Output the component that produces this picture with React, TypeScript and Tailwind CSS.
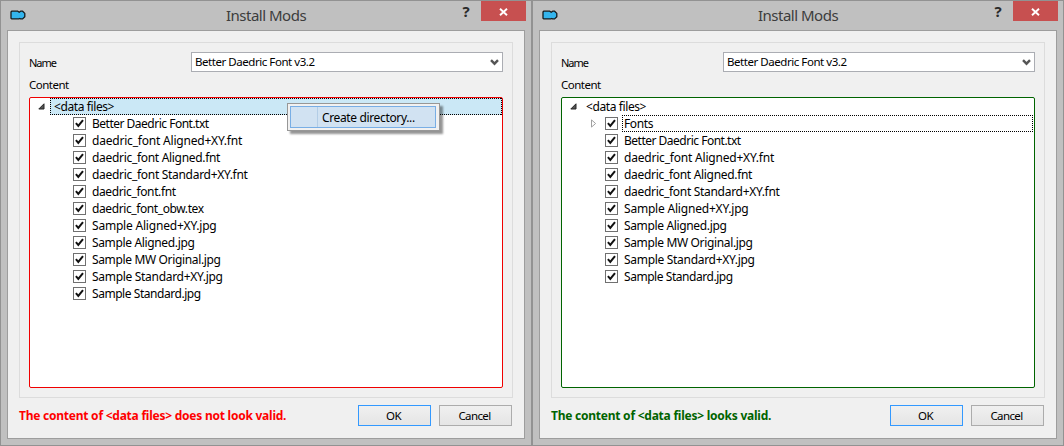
import React from "react";

type Item = { name: string; spacing: string; expandable?: boolean; focused?: boolean };

type DialogProps = {
  items: Item[];
  valid: boolean;
  rootSelected?: boolean;
  menu?: boolean;
};

const AppIcon = () => (
  <svg className="ml-[9px] mt-[9px] shrink-0" width="16" height="10" viewBox="0 0 16 10">
    <path
      d="M1.7 1.2H7.8L9.2 2.3L10.6 1.2H12.6L14.8 3.4V6.7L12.6 8.9H10.6L9.8 8.5L8.8 8.9H1.7L1 8.2V2Z"
      fill="#33b5ee"
      stroke="#151c20"
      strokeWidth="1.3"
      strokeLinejoin="round"
    />
  </svg>
);

const Check = () => (
  <span className="flex h-[13px] w-[13px] shrink-0 items-center justify-center border border-[#707070] bg-white">
    <svg width="11" height="11" viewBox="0 0 11 11">
      <path d="M1.9 5.2L4.3 7.9L9 2.2" fill="none" stroke="#111" strokeWidth="2" />
    </svg>
  </span>
);

const Opened = () => (
  <svg className="shrink-0" width="7" height="7" viewBox="0 0 7 7">
    <path d="M6 .8V6H.8Z" fill="#555" stroke="#262626" strokeWidth="1" />
  </svg>
);

const Closed = () => (
  <svg className="shrink-0" width="6" height="9" viewBox="0 0 6 9">
    <path d="M.5 .9V8.1L4.6 4.5Z" fill="#fff" stroke="#a0a0a0" strokeWidth="1" />
  </svg>
);

const Chevron = () => (
  <svg className="mr-[3px] mt-[1px]" width="9" height="7" viewBox="0 0 9 7">
    <path d="M1 1.2L4.5 4.7L8 1.2" fill="none" stroke="#555" strokeWidth="2.4" />
  </svg>
);

const Dots = () => (
  <svg className="pointer-events-none absolute inset-0 h-full w-full" shapeRendering="crispEdges">
    <path d="M0 .5H460" stroke="#000" strokeDasharray="1 1" />
    <path d="M0 16.5H460" stroke="#000" strokeDasharray="1 1" />
    <path d="M.5 0V17" stroke="#000" strokeDasharray="1 1" />
    <svg x="100%" width="1" height="17" overflow="visible">
      <path d="M-.5 0V17" stroke="#000" strokeDasharray="1 1" />
    </svg>
  </svg>
);

const ContextMenu = () => (
  <div className="absolute left-[257px] top-[5px] h-[28px] w-[153px] border border-[#979797] bg-[#f1f1f1] p-[2px] tracking-[-0.36px] shadow-[3px_3px_2px_rgba(0,0,0,0.42)]">
    <div className="flex h-[22px] w-[146px] items-center border border-[#78aee5] bg-[#d1e2f2]">
      <span className="h-full w-[27px] border-r border-[#b3cde6]" />
      <span className="ml-[4px] mt-[2px] whitespace-nowrap text-[12px] leading-[16px]">Create directory...</span>
    </div>
  </div>
);

const Dialog = ({ items, valid, rootSelected, menu }: DialogProps) => (
  <section className="flex h-[446px] w-[532px] flex-col border border-[#929292] bg-[#c0c0c0]">
    <header className="flex h-[29px] shrink-0 items-start">
      <AppIcon />
      <h1 className="ml-[200px] mt-[4px] w-[141px] whitespace-nowrap text-[15px] leading-[20px] tracking-[-0.5px] text-[#3c3c3c]">
        Install Mods
      </h1>
      <span className="ml-[93px] w-[12px] text-center text-[15px] font-bold leading-[21px] text-[#2b2b2b]">?</span>
      <span className="ml-auto mr-[5px] flex h-[20px] w-[45px] items-center justify-center bg-[#c75050]">
        <svg className="mt-[1px]" width="9" height="8" viewBox="0 0 9 8">
          <path d="M1 .7L8 7.3M8 .7L1 7.3" stroke="#fff" strokeWidth="1.9" />
        </svg>
      </span>
    </header>
    <main className="mx-[6px] flex h-[409px] flex-col border border-[#9d9d9d] bg-[#f0f0f0] px-[11px] pt-[11px]">
      <div className="flex h-[356px] flex-col border border-[#dcdcdc] px-[9px] pt-[9px]">
        <div className="flex h-[20px] items-center">
          <span className="w-[162px] pt-[2px] text-[11px] tracking-[-1px]">Name</span>
          <div className="flex h-[20px] w-[312px] items-center justify-between border border-[#abadb3] bg-white pl-[3px]">
            <span className="text-[11.5px] leading-[18px] tracking-[-0.45px]">Better Daedric Font v3.2</span>
            <Chevron />
          </div>
        </div>
        <span className="mt-[5px] h-[16px] text-[11.5px] leading-[16px] tracking-[-0.5px]">Content</span>
        <div
          className={`relative mt-[4px] h-[291px] w-[474px] rounded-[2px] border bg-white text-[12px] ${
            valid ? "border-[#006400]" : "border-[#f00000]"
          }`}
        >
          <div className="flex h-[17px] items-center">
            <span className="flex w-[20px] items-center pl-[8px]">
              <Opened />
            </span>
            <span
              className={`relative flex h-[17px] w-[452px] items-center pl-[4px] tracking-[-0.4px] ${rootSelected ? "bg-[#cbe8f6]" : ""}`}
            >
              {"<data files>"}
              {rootSelected && <Dots />}
            </span>
          </div>
          {items.map((item) => (
            <div key={item.name} className="flex h-[17px] items-center">
              <span className="flex w-[43px] items-center pl-[29px]">{item.expandable && <Closed />}</span>
              <Check />
              <span
                className={`relative ml-[4px] flex h-[17px] w-[411px] items-center whitespace-nowrap pl-[2px] ${item.spacing}`}
              >
                {item.name}
                {item.focused && <Dots />}
              </span>
            </div>
          ))}
          {menu && <ContextMenu />}
        </div>
      </div>
      <footer className="mt-[7px] flex h-[21px] items-center">
        <strong
          className={`w-[339px] whitespace-nowrap text-[12px] font-bold tracking-[-0.24px] ${
            valid ? "text-[#006400]" : "text-[#ff0000]"
          }`}
        >
          The content of &lt;data files&gt; {valid ? "looks valid." : "does not look valid."}
        </strong>
        <button className="h-[21px] w-[73px] border border-[#3399ff] bg-linear-to-b from-[#f0f0f0] to-[#e5e5e5] pr-[2px] text-[11.5px] leading-[19px] tracking-[-0.6px]">
          OK
        </button>
        <button className="ml-[8px] h-[21px] w-[73px] border border-[#acacac] bg-linear-to-b from-[#f0f0f0] to-[#e5e5e5] pr-[2px] text-[11.5px] leading-[19px] tracking-[-0.6px]">
          Cancel
        </button>
      </footer>
    </main>
  </section>
);

const readme: Item = { name: "Better Daedric Font.txt", spacing: "tracking-[-0.5px]" };

const fontFiles: Item[] = [
  { name: "daedric_font Aligned+XY.fnt", spacing: "tracking-[-0.2px]" },
  { name: "daedric_font Aligned.fnt", spacing: "tracking-[-0.31px]" },
  { name: "daedric_font Standard+XY.fnt", spacing: "tracking-[-0.3px]" },
  { name: "daedric_font.fnt", spacing: "tracking-[-0.37px]" },
  { name: "daedric_font_obw.tex", spacing: "tracking-[-0.4px]" },
];

const samples: Item[] = [
  { name: "Sample Aligned+XY.jpg", spacing: "tracking-[-0.2px]" },
  { name: "Sample Aligned.jpg", spacing: "tracking-[-0.35px]" },
  { name: "Sample MW Original.jpg", spacing: "tracking-[-0.35px]" },
  { name: "Sample Standard+XY.jpg", spacing: "tracking-[-0.3px]" },
  { name: "Sample Standard.jpg", spacing: "tracking-[-0.45px]" },
];

export default function App() {
  return (
    <div className="flex h-[446px] w-[1064px] overflow-hidden font-['Noto_Sans','Open_Sans',sans-serif] text-black">
      <Dialog valid={false} rootSelected menu items={[readme, ...fontFiles, ...samples]} />
      <Dialog
        valid
        items={[
          { name: "Fonts", spacing: "tracking-[-0.4px]", expandable: true, focused: true },
          readme,
          ...fontFiles.slice(0, 3),
          ...samples,
        ]}
      />
    </div>
  );
}
